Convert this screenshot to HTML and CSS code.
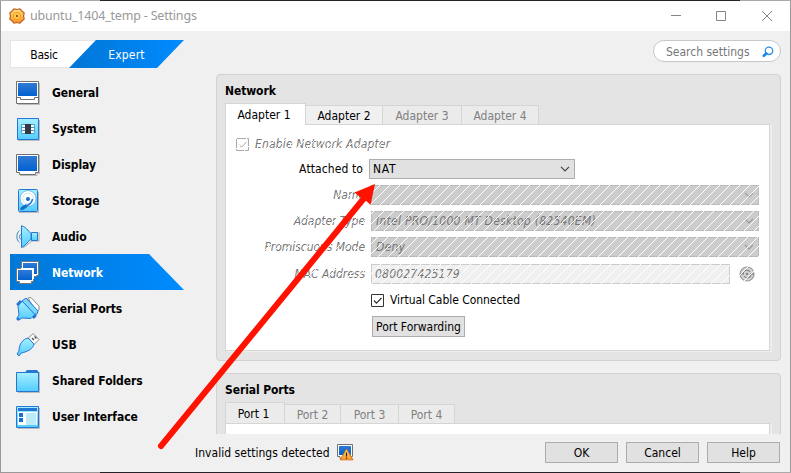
FILE: index.html
```html
<!DOCTYPE html>
<html lang="en">
<head>
<meta charset="utf-8">
<title>ubuntu_1404_temp - Settings</title>
<link rel="stylesheet" href="styles.css">
</head>
<body>
<svg width="0" height="0" class="defs">
  <defs>
    <linearGradient id="cyan" x2="0" y2="1"><stop stop-color="#a6f0ff"/><stop offset="1" stop-color="#52ccff"/></linearGradient>
    <linearGradient id="blue" x2="0" y2="1"><stop stop-color="#3179d4"/><stop offset="1" stop-color="#0062d0"/></linearGradient>
    <linearGradient id="gold" x2="0" y2="1"><stop stop-color="#ffe37a"/><stop offset="1" stop-color="#ff9420"/></linearGradient>
  </defs>
</svg>
<div class="window">
  <header class="titlebar">
    <svg class="app-icon" width="16" height="16" viewBox="0 0 16 16"><path d="M5 .8 8 1.500 11 .8 12.800 3 15.200 5 14.500 8 15.200 11 12.800 13 11 15.200 8 14.500 5 15.200 3.200 13 .8 11 1.500 8 .8 5 3.200 3z" fill="url(#gold)" stroke="#c5602a" stroke-width="1.200" stroke-linejoin="round"/><circle cx="8" cy="8" r="3.600" fill="#ffd04a" stroke="#f09a2b"/><circle cx="8" cy="8" r="1.200" fill="#a84c27"/></svg>
    <span class="caption">ubuntu_1404_temp - Settings</span>
    <svg class="controls" width="104" height="12" viewBox="0 0 104 12" fill="none" stroke="#858585"><path d="M1 5.500h10M46.500 1.500h9v9h-9zM92 1l10 10M102 1 92 11"/></svg>
  </header>

  <div class="toolbar">
    <div class="modes">
      <span class="mode basic">Basic</span>
      <span class="mode expert">Expert</span>
    </div>
    <div class="search"><span>Search settings</span>
      <svg width="12" height="12" viewBox="0 0 12 12"><circle cx="7" cy="4.800" r="3.700" fill="#fff" stroke="#2c8fe4" stroke-width="1.300"/><path d="M4.300 7.500 1.800 9.800" stroke="#1687e8" stroke-width="2.600" stroke-linecap="round"/></svg>
    </div>
  </div>

  <div class="main">
    <nav class="sidebar">
      <div class="item"><svg viewBox="0 0 24 24"><path d="M2 23.500h21.500V2" fill="none" stroke="#bbb"/><path d="M.5.5h22v22H.5z" fill="#fff" stroke="#707070"/><path d="M2 2h19v13H2z" fill="url(#blue)"/><path d="M1 16.500h3.500v2h14v-2H22" fill="none" stroke="#707070"/></svg><span>General</span></div>
      <div class="item"><svg viewBox="0 0 24 24"><path d="M2 23.500h21.500V3" fill="none" stroke="#bbb"/><path d="M1.500 1.500h21v21h-21z" fill="url(#cyan)" stroke="#2476d2"/><path d="M5.500 7.500h13v9h-13z" fill="#fff" stroke="#4aa4d5"/><path d="M6 10.500h12M6 13.500h12" stroke="#4a90bd"/><path d="M9 7h6v10H9z" fill="#333942"/></svg><span>System</span></div>
      <div class="item"><svg viewBox="0 0 24 24"><path d="M4 22.500h17v-2h2.500V2" fill="none" stroke="#bbb"/><path d="M.5 1.500h22v18h-3v2h-16v-2h-3z" fill="#fff" stroke="#707070"/><path d="M2 3h19v15H2z" fill="url(#blue)"/></svg><span>Display</span></div>
      <div class="item"><svg viewBox="0 0 24 24"><path d="M3 23.500h19.500V3" fill="none" stroke="#bbb"/><rect x="2.500" y=".5" width="19" height="22" rx="1" fill="url(#cyan)" stroke="#2476d2"/><circle cx="12" cy="9.500" r="8" fill="#fff" stroke="#55abdf" stroke-width=".8"/><circle cx="12" cy="9.500" r="5.300" fill="none" stroke="#cbe5f2"/><circle cx="12" cy="10" r="2" fill="#1670c6"/><path d="m5 20 6-3.500c4-1.500 5-4 5.500-6.500" fill="none" stroke="#2476d2" stroke-width="1.500"/><path d="m5 18 5-3 1.500 3L7 21H4z" fill="#1670c6"/></svg><span>Storage</span></div>
      <div class="item"><svg viewBox="0 0 24 24"><path d="M7 23 16 16h7V7" fill="none" stroke="#aaa"/><path d="M5.500.7c6 2 7.500 6.800 9.500 7.800v6c-3 1-4 5.500-9.500 8z" fill="url(#cyan)" stroke="#2476d2"/><path d="M15.500 7.500h6v8h-6z" fill="url(#cyan)" stroke="#2476d2"/><path d="M3.500 5.500C0 8 0 15 3.500 17.500M5 9c-2 1.500-2 4 0 5.500" fill="none" stroke="#3c82b8"/></svg><span>Audio</span></div>
      <div class="item selected"><svg viewBox="0 0 24 24"><g stroke="#777" fill="#fff"><path d="M5.500.5h17v14h-2v1h-12v-1h-3z"/><path d="M.5 7.500h17v13h-2v2h-12v-2h-3z"/></g><path d="M7 2h14v11H7z" fill="url(#blue)"/><path d="M5 7h13v11H5z" fill="#fff"/><path d="M2 9h14v10H2z" fill="url(#blue)"/></svg><span>Network</span></div>
      <div class="item"><svg viewBox="0 0 24 24"><path d="m12 1 3-.5L23 9v4l-3 1z" fill="#fff" stroke="#888"/><path d="m6 4 4-3L22 14l-1 3-3 .5z" fill="#79d7fb" stroke="#2476d2"/><path d="m6 4-4 5 1 9-2 3 2 2 3-2 9 .5 4-4z" fill="url(#cyan)" stroke="#2476d2"/><path d="m1 8 4-4M17 21l3-3M1 21l2 2" stroke="#2476d2" stroke-width="2.500"/></svg><span>Serial Ports</span></div>
      <div class="item"><svg viewBox="0 0 24 24"><path d="m12.500 5 4.500-4.500L23 6.500 18 11.500z" fill="#fff" stroke="#888"/><path d="m16 5 2 2M18.500 3.500l2 2" stroke="#555" stroke-width="1.500"/><path d="m12 5 6 6c-1 5-7 8-13 9l-2 3-2-2 2-3C3 11 7 6 12 5z" fill="url(#cyan)" stroke="#2476d2"/></svg><span>USB</span></div>
      <div class="item"><svg viewBox="0 0 24 24"><path d="M2 23.500h21.500V3" fill="none" stroke="#bbb"/><path d="M9 3.500 11 1h10l2 2.500z" fill="#2476d2"/><path d="M.5 3.500h22v19H.5z" fill="url(#cyan)" stroke="#2476d2"/></svg><span>Shared Folders</span></div>
      <div class="item"><svg viewBox="0 0 24 24"><path d="M2 23.500h21.500V3" fill="none" stroke="#bbb"/><path d="M.5 1.500h22v21H.5z" fill="url(#cyan)" stroke="#2476d2"/><path d="M2 3h19v3H2z" fill="#2476d2"/><path d="M2 7h19v13H2z" fill="#fff"/><path d="M3 8h4v4H3zM3 13h4v4H3z" fill="#1670ce"/><path d="M10 8h10v12H10z" fill="#bdeaf8"/></svg><span>User Interface</span></div>
    </nav>

    <div class="content">
      <section class="panel network">
        <h2>Network</h2>
        <div class="tabs">
          <span class="tab active t1">Adapter 1</span><span class="tab enabled t2">Adapter 2</span><span class="tab t3">Adapter 3</span><span class="tab t4">Adapter 4</span>
        </div>
        <div class="pane">
          <div class="enable struck"><svg class="check" width="13" height="13" viewBox="0 0 13 13"><path d="M.5.5h12v12H.5zM3 6.500l2.500 2.700L10.500 4" fill="none" stroke="#aaa"/></svg><i>Enable Network Adapter</i></div>
          <div class="attached"><span>Attached to</span><div class="combo nat">NAT<svg width="10" height="6" viewBox="0 0 10 6"><path d="m1 .8 4 4 4-4" fill="none" stroke="#444" stroke-width="1.200"/></svg></div></div>
          <div class="disabled struck">
            <label>Name</label><div class="combo wide"><svg width="10" height="6" viewBox="0 0 10 6"><path d="m1 .8 4 4 4-4" fill="none" stroke="#999" stroke-width="1.200"/></svg></div>
            <label>Adapter Type</label><div class="combo wide">Intel PRO/1000 MT Desktop (82540EM)<svg width="10" height="6" viewBox="0 0 10 6"><path d="m1 .8 4 4 4-4" fill="none" stroke="#999" stroke-width="1.200"/></svg></div>
            <label>Promiscuous Mode</label><div class="combo wide">Deny<svg width="10" height="6" viewBox="0 0 10 6"><path d="m1 .8 4 4 4-4" fill="none" stroke="#999" stroke-width="1.200"/></svg></div>
            <label>MAC Address</label><div class="macrow"><div class="field">080027425179</div><svg width="16" height="16" viewBox="0 0 16 16"><circle cx="8" cy="8" r="7" fill="#d5d5d5" stroke="#999" stroke-width="1.200"/><path d="M4 8c0-4 5-5 7-2M12 8c0 4-5 5-7 2M1 8h4M11 8h4" stroke="#888" stroke-width="1.300" fill="none"/><circle cx="8" cy="8" r="1.300" fill="#888"/></svg></div>
          </div>
          <div class="cable"><svg class="check" width="13" height="13" viewBox="0 0 13 13"><path d="M.5.5h12v12H.5z" fill="#fff" stroke="#333"/><path d="m3 6.500 2.500 2.700L10.500 4" fill="none" stroke="#333" stroke-width="1.200"/></svg><span>Virtual Cable Connected</span></div>
          <button class="forward">Port Forwarding</button>
        </div>
      </section>
      <section class="panel serial">
        <h2>Serial Ports</h2>
        <div class="tabs">
          <span class="tab active p1">Port 1</span><span class="tab p2">Port 2</span><span class="tab p3">Port 3</span><span class="tab p4">Port 4</span>
        </div>
        <div class="pane"></div>
      </section>
    </div>
  </div>

  <footer class="footer">
    <span class="invalid">Invalid settings detected</span>
    <svg class="warn" width="17" height="17" viewBox="0 0 17 17"><path d="M.5.5h15v12H13v2H3v-2H.5z" fill="#fff" stroke="#707070"/><path d="M2 2h12v9H2z" fill="url(#blue)"/><path d="M9.500 5 16 15.800H3.200z" fill="url(#gold)" stroke="#d9751c" stroke-linejoin="round"/><path d="M9.500 8.500v4M9.500 13.500v1.300" stroke="#222" stroke-width="1.200"/></svg>
    <div class="buttons"><button>OK</button><button>Cancel</button><button>Help</button></div>
  </footer>
</div>
<svg class="arrow" width="791" height="473" viewBox="0 0 791 473"><path d="M161 446 365 197" stroke="#ff1200" stroke-width="6" stroke-linecap="round"/><path d="m375 184-20.500 8.500 5.500 4.500 7.500 5 3 3z" fill="#ff1200"/></svg>
</body>
</html>
```
FILE: styles.css
```css
* { box-sizing: border-box; }
body {
  margin: 0;
  width: 791px;
  height: 473px;
  overflow: hidden;
  font: 12px/16px "DejaVu Sans Condensed", "DejaVu Sans", sans-serif;
  font-stretch: condensed;
  letter-spacing: 0;
  color: #000;
}
.defs { position: absolute; }
.window {
  height: 473px;
  display: flex;
  flex-direction: column;
  padding: 1px;
  background:
    linear-gradient(90deg, #aaa 100px, #242226 100px, #242226 740px, #aaa 740px) 0 0 / 100% 1px no-repeat,
    linear-gradient(90deg, #999 100px, #242226 100px, #242226 740px, #aaa 740px) 0 100% / 100% 1px no-repeat,
    linear-gradient(#999, #999) 0 0 / 1px 100% no-repeat,
    linear-gradient(#999, #999) 100% 0 / 1px 100% no-repeat,
    #f0f0f0;
}
.titlebar {
  flex: none;
  height: 30px;
  padding: 0 16px 1px 8px;
  display: flex;
  align-items: center;
  background: #fff;
  color: #999;
}
.app-icon { margin-right: 5px; }
.caption { font: 12.5px/16px "Noto Sans", sans-serif; letter-spacing: -0.19px; }
.controls { margin-left: auto; }

.toolbar {
  flex: none;
  height: 43px;
  padding: 9px 9px 0;
  display: flex;
  justify-content: space-between;
}
.modes { display: flex; width: 175px; height: 28px; letter-spacing: -0.2px; }
.mode { display: flex; align-items: center; justify-content: center; padding-top: 1px; }
.basic {
  width: 87px;
  padding-right: 19px;
  background: #fff;
  border: 1px solid #e6e6e6;
}
.expert {
  width: 115px;
  margin-left: -28px;
  color: #fff;
  letter-spacing: 0.2px;
  background: linear-gradient(90deg, #0076d5, #008bff);
  clip-path: polygon(27px 0, 100% 0, 88px 100%, 0 100%);
}
.search {
  width: 128px;
  height: 22px;
  border: 1px solid #c8c8c8;
  border-radius: 11px;
  background: #fff;
  color: #777;
  padding: 1px 6px 0 12px;
  display: flex;
  align-items: center;
  justify-content: space-between;
}

.main { height: 360px; display: flex; }
.sidebar { width: 215px; padding-left: 9px; }
.item {
  height: 36px;
  width: 174px;
  padding: 2px 0 0 6px;
  display: flex;
  align-items: center;
  gap: 12px;
  font-weight: bold;
  letter-spacing: -0.08px;
}
.item svg { width: 24px; height: 24px; }
.selected {
  color: #fff;
  background: linear-gradient(90deg, #0078d7, #008bff);
  clip-path: polygon(0 0, 139px 0, 100% 100%, 0 100%);
}

.content { width: 565px; height: 360px; overflow: hidden; }
.panel {
  background: #e4e4e4;
  border: 1px solid #d2d2d2;
  border-radius: 4px;
  padding: 8px 8px 0;
  overflow: hidden;
}
.network { height: 287px; }
.serial { height: 100px; margin-top: 12px; }
h2 { margin: 0; font-size: 12px; line-height: 17px; letter-spacing: -0.1px; }
.tabs { height: 25px; padding-top: 3px; display: flex; align-items: flex-end; }
.tab {
  height: 19px;
  margin-bottom: 1px;
  border: 1px solid #d5d5d5;
  border-width: 1px 1px 0 0;
  background: #ebebeb;
  color: #808080;
  line-height: 20px;
  text-align: center;
}
.tab.enabled { color: #000; background: #f0f0f0; }
.tab.active {
  position: relative;
  height: 22px;
  margin-bottom: 0;
  padding-right: 3px;
  line-height: 23px;
  background: #fff;
  color: #000;
  border-left-width: 1px;
}
.tab.active.p1 { background: #ebebeb; height: 21px; margin-bottom: 1px; }
.t1 { width: 81px; }
.t2 { width: 77px; }
.t3 { width: 79px; }
.t4 { width: 77px; }
.p1 { width: 60px; }
.p2 { width: 56px; }
.p3 { width: 58px; }
.p4 { width: 56px; }
.pane {
  width: 545px;
  height: 227px;
  margin-top: -1px;
  background: #fff;
  border: 1px solid #d5d5d5;
  box-shadow: 2px 1px #eee;
  padding: 12px 9px 0 10px;
}
.struck { position: relative; }
.struck::after {
  content: "";
  position: absolute;
  inset: 0;
  background: linear-gradient(135deg, transparent 46.5%, #fff 46.5%, #fff 53.5%, transparent 53.5%) 5px 0 / 10px 10px fixed;
}
i, .disabled { font-style: italic; color: #777; }
.enable { height: 14px; display: flex; align-items: center; gap: 6px; letter-spacing: 0.16px; }
.attached {
  height: 20px;
  margin-top: 8px;
  display: flex;
  align-items: center;
}
.attached span { width: 127px; margin-right: 6px; text-align: right; letter-spacing: 0.1px; }
.combo {
  width: 206px;
  height: 20px;
  display: flex;
  align-items: center;
  border: 1px solid #acacac;
  background: #e1e1e1;
  padding: 0 4px 0 3px;
}
.combo svg { margin-left: auto; }
.nat { letter-spacing: 0.7px; }
.combo.wide { width: 388px; background: #ccc; border-color: #bbb; padding-left: 4px; letter-spacing: 0.27px; }
.disabled {
  margin-top: 6px;
  display: grid;
  grid-template-columns: 129px 388px;
  grid-template-rows: 20px 20px 20px 21px;
  column-gap: 6px;
  row-gap: 6px;
  align-items: center;
}
label { text-align: right; white-space: nowrap; letter-spacing: -0.05px; }
.macrow { display: flex; align-items: center; gap: 9px; }
.field {
  width: 359px;
  height: 20px;
  line-height: 18px;
  padding-left: 3px;
  border: 1px solid #ccc;
  background: #f0f0f0;
  letter-spacing: 0.2px;
}
.cable { height: 14px; margin: 9px 0 0 135px; display: flex; align-items: center; gap: 6px; }
.cable span { letter-spacing: -0.04px; }
button {
  height: 21px;
  width: 73px;
  padding: 1px 0 0;
  border: 1px solid #acacac;
  background: #e1e1e1;
  font: inherit;
  letter-spacing: inherit;
  color: #000;
}
.forward { display: block; width: 93px; margin: 9px 0 0 136px; }

.footer { height: 38px; display: flex; align-items: center; padding: 0 10px 2px 194px; }
.invalid { width: 142px; padding-top: 1px; white-space: nowrap; letter-spacing: 0.03px; }
.buttons { margin-left: auto; display: flex; gap: 8px; }
.arrow { position: absolute; left: 0; top: 0; }
```
